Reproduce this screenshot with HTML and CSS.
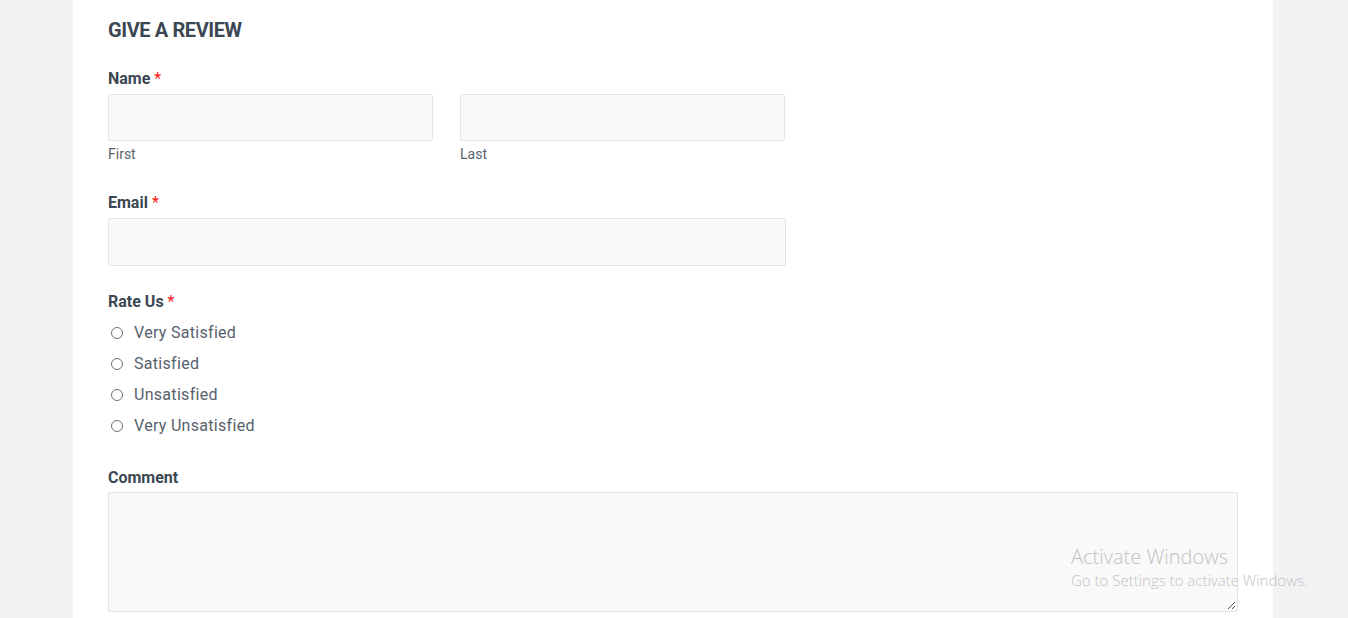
FILE: index.html
```html
<!DOCTYPE html>
<html>
<head>
<meta charset="utf-8">
<link rel="stylesheet" href="styles.css">
</head>
<body>
<div class="card">
  <h2 class="title">Give a Review</h2>
  <div class="field field-name">
    <div class="label">Name <span class="req">*</span></div>
    <div class="name-row">
      <div class="name-col">
        <div class="input"></div>
        <div class="sub">First</div>
      </div>
      <div class="name-col">
        <div class="input"></div>
        <div class="sub">Last</div>
      </div>
    </div>
  </div>
  <div class="field">
    <div class="label">Email <span class="req">*</span></div>
    <div class="input email"></div>
  </div>
  <div class="field field-radios">
    <div class="label">Rate Us <span class="req">*</span></div>
    <div class="radios">
      <div class="radio"><span class="circle"></span>Very Satisfied</div>
      <div class="radio"><span class="circle"></span>Satisfied</div>
      <div class="radio"><span class="circle"></span>Unsatisfied</div>
      <div class="radio"><span class="circle"></span>Very Unsatisfied</div>
    </div>
  </div>
  <div class="field">
    <div class="label label-tight">Comment</div>
    <div class="textarea">
      <svg class="grip" width="9" height="9" viewBox="0 0 9 9"><path d="M8 1 L1 8 M8 5 L5 8" stroke="#555" stroke-width="1"/></svg>
    </div>
  </div>
</div>
<div class="watermark">
  <div class="wm1">Activate Windows</div>
  <div class="wm2">Go to Settings to activate Windows.</div>
</div>
</body>
</html>
```
FILE: styles.css
```css
html, body { margin: 0; padding: 0; }
body {
  background: #f1f2f4;
  font-family: Roboto, "Liberation Sans", sans-serif;
  color: #3d4957;
  height: 618px;
  overflow: hidden;
}
.card {
  width: 1130px;
  margin-left: 73px;
  background: #fff;
  padding: 17px 35px 40px;
  min-height: 618px;
}
.title {
  margin: 0 0 26px;
  font-size: 20px;
  font-weight: 700;
  letter-spacing: -0.4px;
  text-transform: uppercase;
  line-height: 26px;
  color: #3b4753;
}
.field { margin-bottom: 26px; }
.field-name { margin-bottom: 30px; }
.field-radios { margin-bottom: 31px; }
.label {
  font-size: 16px;
  font-weight: 700;
  line-height: 20px;
  margin-bottom: 5px;
  color: #3b4753;
}
.label-tight { margin-bottom: 4px; }
.req { color: #ff1a1a; font-weight: 400; }
.name-row { display: flex; gap: 27px; }
.name-col { width: 325px; }
.input {
  height: 45px;
  background: #f9f9f9;
  border: 1px solid #e5e5e5;
  border-radius: 2px;
}
.email { width: 676px; height: 46px; }
.sub {
  font-size: 14px;
  color: #5a6470;
  margin-top: 4px;
  line-height: 18px;
}
.radios { display: flex; flex-direction: column; gap: 9px; margin-top: 10px; }
.radio {
  display: flex;
  align-items: center;
  font-size: 16px;
  letter-spacing: 0.3px;
  line-height: 22px;
  color: #56616d;
}
.circle {
  width: 12px; height: 12px;
  border: 1px solid #707070;
  border-radius: 50%;
  margin: 0 11px 0 3px;
  box-sizing: border-box;
}
.textarea {
  height: 118px;
  background: #f9f9f9;
  border: 1px solid #e5e5e5;
  border-radius: 2px;
  position: relative;
}
.grip { position: absolute; right: 1px; bottom: 1px; }
.watermark {
  position: absolute;
  left: 1071px;
  top: 544px;
  color: #c2c2c2;
  font-family: "Open Sans", sans-serif;
  font-weight: 300;
}
.wm1 { font-size: 20px; line-height: 26px; }
.wm2 { font-size: 15px; line-height: 20px; }
```
